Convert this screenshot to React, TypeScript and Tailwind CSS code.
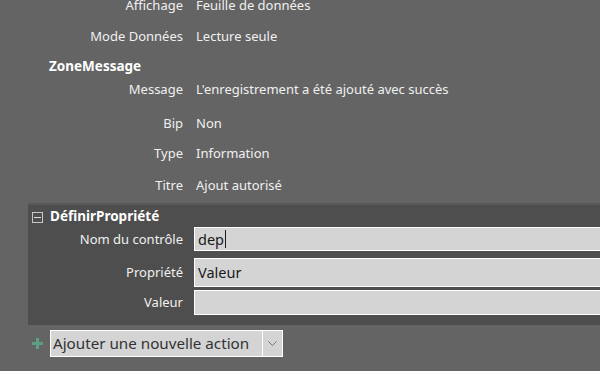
import React from "react";

const font = { fontFamily: '"Noto Sans", "Open Sans", sans-serif' };

function Row({ label, value, h, cls = "" }: { label: string; value: string; h: string; cls?: string }) {
  return (
    <div className={`flex items-center ${h} ${cls}`}>
      <div className="w-[183px] text-right text-[#f0f0f0]">{label}</div>
      <div className="ml-[13px] text-[#f0f0f0]">{value}</div>
    </div>
  );
}

function Field({ label, value, h, cls = "", caret = false }: { label: string; value: string; h: string; cls?: string; caret?: boolean }) {
  return (
    <div className={`flex items-center ${cls}`}>
      <div className="w-[155px] text-right text-[#f0f0f0]">{label}</div>
      <div className={`ml-[11px] flex-1 ${h} bg-[#d4d4d4] border border-r-0 border-white flex items-center pl-[3px] text-[#1a1a1a] text-[14.5px]`}>
        {value}
        {caret && <span className="inline-block w-px h-[18px] bg-[#1a1a1a] ml-px" />}
      </div>
    </div>
  );
}

export default function App() {
  return (
    <div className="w-[600px] h-[371px] bg-[#646464] overflow-hidden text-[13px] leading-none" style={font}>
      <div className="mt-[-10px]">
        <Row label="Affichage" value="Feuille de données" h="h-[31px]" />
        <Row label="Mode Données" value="Lecture seule" h="h-[30px]" />
        <div className="h-[29px] pt-[3px] flex items-center pl-[49px] font-bold text-white text-[13.5px]">ZoneMessage</div>
        <Row label="Message" value="L'enregistrement a été ajouté avec succès" h="h-[19px]" />
        <Row label="Bip" value="Non" h="h-[30px]" cls="mt-[9px]" />
        <Row label="Type" value="Information" h="h-[31px]" />
        <Row label="Titre" value="Ajout autorisé" h="h-[31px]" cls="pt-[1px]" />
      </div>
      <div className="ml-[28px] mt-[3px] bg-[#4e4e4e] border-t-2 border-[#585858] pb-[10px]">
        <div className="h-[22px] pt-[2px] flex items-center">
          <div className="ml-[4px] w-[11px] h-[11px] border border-[#c8c8c8] flex items-center justify-center">
            <div className="w-[7px] h-px bg-[#e0e0e0]" />
          </div>
          <div className="ml-[7px] font-bold text-white text-[13.5px]">DéfinirPropriété</div>
        </div>
        <Field label="Nom du contrôle" value="dep" h="h-[24px]" caret />
        <Field label="Propriété" value="Valeur" h="h-[29px]" cls="mt-[7px]" />
        <Field label="Valeur" value="" h="h-[25px]" cls="mt-[3px]" />
      </div>
      <div className="flex items-center mt-[5px]">
        <svg className="ml-[32px]" width="11" height="11" viewBox="0 0 11 11">
          <rect x="4" y="0" width="3" height="11" fill="#5c9e82" />
          <rect x="0" y="4" width="11" height="3" fill="#5c9e82" />
        </svg>
        <div className="ml-[7px] w-[233px] h-[27px] bg-[#d4d4d4] border border-white flex items-center">
          <div className="flex-1 pl-[2px] text-[#333] text-[15.2px]">Ajouter une nouvelle action</div>
          <div className="w-[20px] h-full border-l border-white flex items-center justify-center">
            <svg width="9" height="5" viewBox="0 0 9 5">
              <path d="M0.5 0.5 L4.5 4.5 L8.5 0.5" stroke="#707070" fill="none" strokeWidth="1" />
            </svg>
          </div>
        </div>
      </div>
    </div>
  );
}
